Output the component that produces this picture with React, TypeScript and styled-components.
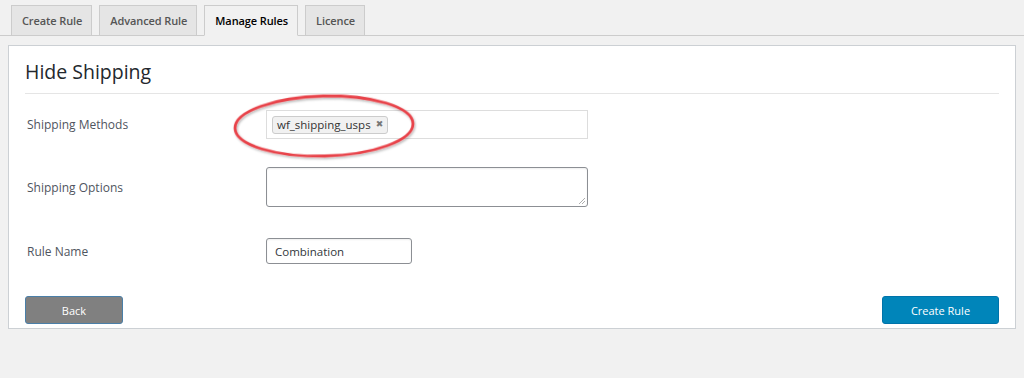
import styled, { createGlobalStyle } from 'styled-components';

const GlobalStyle = createGlobalStyle`
  html, body {
    margin: 0;
    padding: 0;
    background: #f1f1f1;
    font-family: 'Open Sans', 'Liberation Sans', sans-serif;
    color: #32373c;
  }
`;

const Page = styled.div`
  width: 1024px;
  height: 378px;
  overflow: hidden;
  background: #f1f1f1;
`;

// tab bar along the top
const TabBar = styled.div`
  display: flex;
  align-items: flex-end;
  gap: 7px;
  padding: 5px 0 0 11px;
  height: 30px;
  border-bottom: 1px solid #ccc;
`;

const Tab = styled.div<{ $active?: boolean }>`
  box-sizing: border-box;
  height: ${(p) => (p.$active ? '31px' : '30px')};
  margin-bottom: ${(p) => (p.$active ? '-1px' : '0')};
  padding: 0 9px 0 10px;
  display: flex;
  align-items: center;
  font-size: 11px;
  letter-spacing: -0.1px;
  font-weight: 600;
  color: ${(p) => (p.$active ? '#000' : '#555')};
  background: ${(p) => (p.$active ? '#f1f1f1' : '#e5e5e5')};
  border: 1px solid #ccc;
  border-bottom: ${(p) => (p.$active ? '1px solid #f1f1f1' : 'none')};
`;

const Panel = styled.div`
  box-sizing: border-box;
  margin: 9px 8px 0 8px;
  background: #fff;
  border: 1px solid #ccd0d4;
  padding: 0 16px 4px 16px;
  height: 284px;
`;

const Heading = styled.h2`
  margin: 12px 0 0 0;
  padding: 0 0 7px 0;
  font-size: 19.5px;
  line-height: 28px;
  font-weight: 400;
  color: #23282d;
  border-bottom: 1px solid #e5e5e5;
`;

const FormTable = styled.div`
  display: flex;
  flex-direction: column;
  padding-top: 16px;
`;

const Row = styled.div<{ $gap?: number }>`
  display: grid;
  grid-template-columns: 241px 1fr;
  align-items: center;
  margin-top: ${(p) => p.$gap ?? 0}px;
`;

const Label = styled.div`
  font-size: 12px;
  color: #4f5560;
  padding-left: 2px;
`;

const Field = styled.div`
  position: relative;
`;

const TagBox = styled.div`
  box-sizing: border-box;
  width: 322px;
  height: 29px;
  border: 1px solid #ddd;
  display: flex;
  align-items: center;
  padding-left: 5px;
  background: #fff;
`;

const Tag = styled.span`
  display: inline-flex;
  align-items: center;
  gap: 5px;
  height: 16px;
  padding: 0 4px;
  font-size: 11.5px;
  color: #333;
  background: #f1f1f1;
  border: 1px solid #ccc;
  border-radius: 3px;
`;

const TagRemove = styled.span`
  font-family: 'DejaVu Sans', sans-serif;
  font-size: 9px;
  color: #777;
  line-height: 1;
`;

const TextArea = styled.div`
  box-sizing: border-box;
  position: relative;
  width: 322px;
  height: 40px;
  border: 1px solid #8c8f94;
  border-radius: 3px;
  background: #fff;
  box-shadow: inset 0 1px 2px rgba(0, 0, 0, 0.07);
`;

const Resize = styled.svg`
  position: absolute;
  right: 1px;
  bottom: 1px;
`;

const TextInput = styled.div`
  box-sizing: border-box;
  width: 146px;
  height: 26px;
  border: 1px solid #8c8f94;
  border-radius: 3px;
  display: flex;
  align-items: center;
  padding-left: 8px;
  font-size: 11.5px;
  color: #32373c;
  box-shadow: inset 0 1px 2px rgba(0, 0, 0, 0.07);
`;

const Annotation = styled.svg`
  position: absolute;
  left: -34px;
  top: -16px;
  pointer-events: none;
  overflow: visible;
`;

const Actions = styled.div`
  display: flex;
  justify-content: space-between;
  margin-top: 32px;
`;

const Button = styled.button<{ $primary?: boolean }>`
  box-sizing: border-box;
  width: ${(p) => (p.$primary ? '117px' : '98px')};
  height: 28px;
  border-radius: 3px;
  border: 1px solid ${(p) => (p.$primary ? '#0073aa' : '#4a7fa8')};
  background: ${(p) => (p.$primary ? '#0085ba' : '#808080')};
  color: #fff;
  font-family: 'Open Sans', 'Liberation Sans', sans-serif;
  font-size: 11px;
  cursor: pointer;
`;

export default function App() {
  return (
    <Page>
      <GlobalStyle />
      <TabBar>
        <Tab>Create Rule</Tab>
        <Tab>Advanced Rule</Tab>
        <Tab $active>Manage Rules</Tab>
        <Tab>Licence</Tab>
      </TabBar>
      <Panel>
        <Heading>Hide Shipping</Heading>
        <FormTable>
          <Row>
            <Label>Shipping Methods</Label>
            <Field>
              <TagBox>
                <Tag>
                  wf_shipping_usps <TagRemove>✖</TagRemove>
                </Tag>
              </TagBox>
              <Annotation width="184" height="66" viewBox="0 0 184 66">
                <defs>
                  <filter id="sh" x="-10%" y="-20%" width="120%" height="140%">
                    <feDropShadow dx="1" dy="1.5" stdDeviation="1.2" floodColor="#000" floodOpacity="0.3" />
                  </filter>
                </defs>
                <ellipse
                  cx="92"
                  cy="32"
                  rx="89"
                  ry="30"
                  transform="rotate(-1.5 92 32)"
                  fill="none"
                  stroke="#e8434a"
                  strokeWidth="2.8"
                  filter="url(#sh)"
                />
              </Annotation>
            </Field>
          </Row>
          <Row $gap={28}>
            <Label>Shipping Options</Label>
            <Field>
              <TextArea>
                <Resize width="8" height="8" viewBox="0 0 8 8">
                  <path d="M7 1 L1 7 M7 4 L4 7" stroke="#999" strokeWidth="0.8" />
                </Resize>
              </TextArea>
            </Field>
          </Row>
          <Row $gap={31}>
            <Label>Rule Name</Label>
            <Field>
              <TextInput>Combination</TextInput>
            </Field>
          </Row>
        </FormTable>
        <Actions>
          <Button>Back</Button>
          <Button $primary>Create Rule</Button>
        </Actions>
      </Panel>
    </Page>
  );
}
